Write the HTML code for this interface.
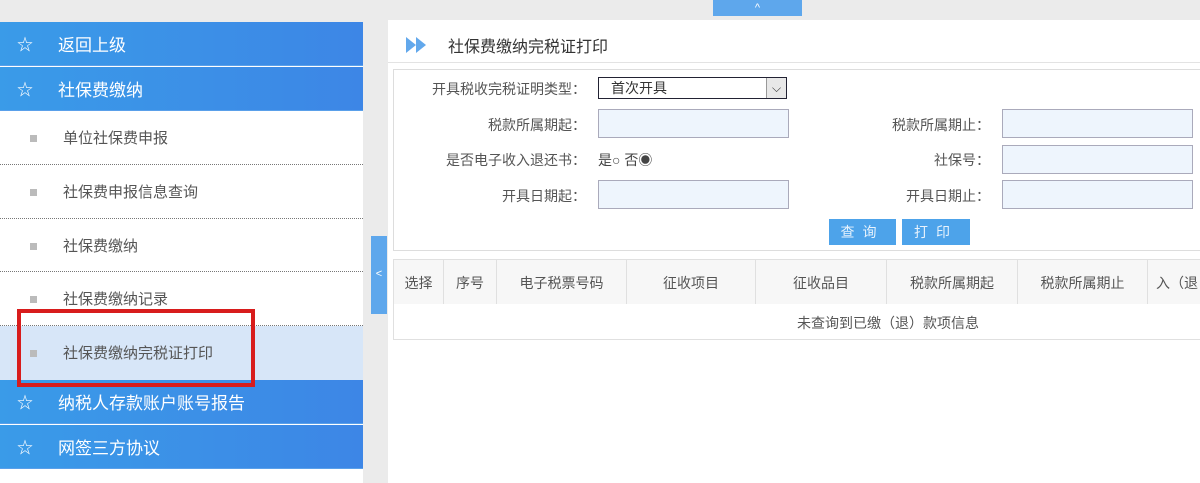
<!DOCTYPE html>
<html><head><meta charset="utf-8"><style>
*{margin:0;padding:0;box-sizing:border-box}
body{width:1200px;height:483px;background:#ebebeb;position:relative;overflow:hidden;font-family:"Liberation Sans","Noto Sans CJK SC",sans-serif;color:#555}
.a{position:absolute}
.hd{left:0;width:363px;height:44px;background:linear-gradient(90deg,#3a9be8,#3d86e6);color:#fff;font-size:17px;line-height:47px;border-bottom:1px solid #5aa0ea}
.hd .s{position:absolute;left:17px;font-size:16px}
.hd .t{position:absolute;left:58px}
.it{left:0;width:363px;height:54px;background:#fff;font-size:15px;line-height:56px}
.it .d{position:absolute;left:30px;top:24px;width:7px;height:7px;background:#bbb}
.it .t{position:absolute;left:63px}
.dl{left:0;width:363px;height:0;border-top:1px dotted #777}
.lb{font-size:14px;text-align:right;line-height:30px}
.in{background:#eef5fd;border:1px solid #aab;height:29px;width:191px}
.btn{background:#4da3ea;color:#e8f3fd;font-size:14px;text-align:center;line-height:26px;height:26px;letter-spacing:8px}
th{font-weight:normal;font-size:14px;color:#555;border-right:1px solid #e0e0e0;height:44px;background:#f7f7f7;padding-top:3px}
</style></head><body>
<div class="a" style="left:713px;top:0;width:89px;height:16px;background:#5ea7ec;color:#fff;font-size:11px;text-align:center;line-height:16px">^</div>
<div class="a" style="left:0;top:22px;width:363px;height:461px;background:#fff"></div>
<div class="a hd" style="top:22px"><span class="s">☆</span><span class="t">返回上级</span></div>
<div class="a hd" style="top:67px"><span class="s">☆</span><span class="t">社保费缴纳</span></div>
<div class="a it" style="top:111px"><span class="d"></span><span class="t">单位社保费申报</span></div>
<div class="a it" style="top:165px"><span class="d"></span><span class="t">社保费申报信息查询</span></div>
<div class="a it" style="top:219px"><span class="d"></span><span class="t">社保费缴纳</span></div>
<div class="a it" style="top:272px"><span class="d"></span><span class="t">社保费缴纳记录</span></div>
<div class="a it" style="top:326px;background:#d7e6f8"><span class="d"></span><span class="t">社保费缴纳完税证打印</span></div>
<div class="a dl" style="top:164px"></div>
<div class="a dl" style="top:218px"></div>
<div class="a dl" style="top:271px"></div>
<div class="a dl" style="top:325px"></div>
<div class="a hd" style="top:380px"><span class="s">☆</span><span class="t">纳税人存款账户账号报告</span></div>
<div class="a hd" style="top:425px"><span class="s">☆</span><span class="t">网签三方协议</span></div>
<div class="a" style="left:17px;top:309px;width:238px;height:78px;border:4px solid #d81c1c"></div>
<div class="a" style="left:371px;top:236px;width:16px;height:78px;background:#5ea7ec;color:#fff;font-size:11px;text-align:center;line-height:76px">&lt;</div>
<div class="a" style="left:388px;top:20px;width:812px;height:463px;background:#fff"></div>
<div class="a" style="left:388px;top:62px;width:812px;height:1px;background:#e3e3e3"></div>
<svg class="a" style="left:406px;top:37px" width="22" height="16"><path d="M0 0L10 8L0 16Z M10 0L20 8L10 16Z" fill="#62a8ec"/></svg>
<div class="a" style="left:448px;top:33px;font-size:16px;color:#333">社保费缴纳完税证打印</div>
<div class="a" style="left:393px;top:69px;width:810px;height:182px;border:1px solid #ddd;border-right:none"></div>
<div class="a lb" style="left:390px;top:74px;width:196px">开具税收完税证明类型：</div>
<div class="a" style="left:598px;top:77px;width:189px;height:22px;border:1px solid #223;background:#fff;font-size:14px;line-height:20px;padding-left:12px;color:#333">首次开具<span style="position:absolute;right:0;top:0;width:20px;height:20px;background:#e8e8e8;border-left:1px solid #999;text-align:center;font-size:12px">⌵</span></div>
<div class="a lb" style="left:390px;top:110px;width:196px">税款所属期起：</div>
<div class="a in" style="left:598px;top:109px"></div>
<div class="a lb" style="left:390px;top:145px;width:196px">是否电子收入退还书：</div>
<div class="a" style="left:598px;top:145px;font-size:14px;line-height:30px;color:#444">是○ 否◉</div>
<div class="a lb" style="left:390px;top:181px;width:196px">开具日期起：</div>
<div class="a in" style="left:598px;top:180px"></div>
<div class="a lb" style="left:790px;top:110px;width:200px">税款所属期止：</div>
<div class="a in" style="left:1002px;top:109px"></div>
<div class="a lb" style="left:790px;top:145px;width:200px">社保号：</div>
<div class="a in" style="left:1002px;top:145px"></div>
<div class="a lb" style="left:790px;top:181px;width:200px">开具日期止：</div>
<div class="a in" style="left:1002px;top:180px"></div>
<div class="a btn" style="left:829px;top:219px;width:67px">查询</div>
<div class="a btn" style="left:902px;top:219px;width:68px">打印</div>
<table class="a" style="left:393px;top:259px;width:830px;border-collapse:collapse;border:1px solid #e0e0e0">
<tr><th style="width:50px">选择</th><th style="width:53px">序号</th><th style="width:130px">电子税票号码</th><th style="width:129px">征收项目</th><th style="width:131px">征收品目</th><th style="width:131px">税款所属期起</th><th style="width:130px">税款所属期止</th><th style="text-align:left;padding-left:8px">入（退</th></tr>
<tr><td colspan="8" style="height:36px;font-size:14px;color:#555;padding-left:403px;padding-top:3px;background:#fff">未查询到已缴（退）款项信息</td></tr>
</table>
</body></html>
